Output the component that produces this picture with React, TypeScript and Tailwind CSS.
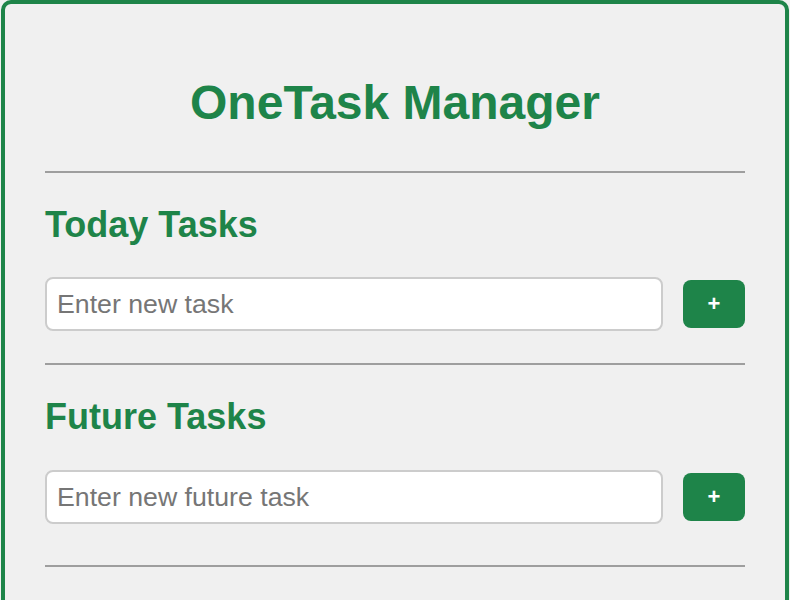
import React, { useState } from 'react';

const font = { fontFamily: '"Liberation Sans", Arial, sans-serif' };

interface TaskSectionProps {
  title: string;
  placeholder: string;
  first?: boolean;
}

const TaskSection: React.FC<TaskSectionProps> = ({ title, placeholder, first }) => {
  const [value, setValue] = useState('');
  const [tasks, setTasks] = useState<string[]>([]);

  const addTask = () => {
    if (!value.trim()) return;
    setTasks(prev => [...prev, value.trim()]);
    setValue('');
  };

  return (
    <section>
      <h2 className="mt-[32px] text-[36px] leading-[40px] font-bold text-[#1e8449]">
        {title}
      </h2>
      <div className={`${first ? 'mt-[32px]' : 'mt-[33px]'} flex items-center gap-[20px]`}>
        <input
          type="text"
          value={value}
          onChange={e => setValue(e.target.value)}
          placeholder={placeholder}
          className="h-[54px] flex-1 rounded-[8px] border-2 border-[#cccccc] bg-white px-[10px] text-[26.7px] text-[#333] placeholder:text-[#767676] outline-none"
          style={font}
        />
        <button
          onClick={addTask}
          className="h-[48px] w-[62px] rounded-[8px] bg-[#1e8449] text-[22px] font-bold leading-none text-white"
          style={font}
        >
          +
        </button>
      </div>
      {tasks.length > 0 && (
        <ul className="mt-4">
          {tasks.map((t, i) => (
            <li key={i} className="py-1 text-[22px] text-[#333]">{t}</li>
          ))}
        </ul>
      )}
    </section>
  );
};

export default function App() {
  return (
    <div className="min-h-screen bg-[#f0f0f0]" style={font}>
      <div className="ml-[1px] w-[788px] min-h-[700px] rounded-[10px] border-4 border-[#1e8449] bg-[#f0f0f0] px-[40px] pt-[71px] pb-10">
        <h1 className="text-center text-[48px] leading-[55px] font-bold text-[#1e8449]">
          OneTask Manager
        </h1>
        <hr className="mt-[41px] h-[2px] border-0 bg-[#9e9e9e]" />
        <TaskSection title="Today Tasks" placeholder="Enter new task" first />
        <hr className="mt-[32px] h-[2px] border-0 bg-[#9e9e9e]" />
        <TaskSection title="Future Tasks" placeholder="Enter new future task" />
        <hr className="mt-[41px] h-[2px] border-0 bg-[#9e9e9e]" />
      </div>
    </div>
  );
}
